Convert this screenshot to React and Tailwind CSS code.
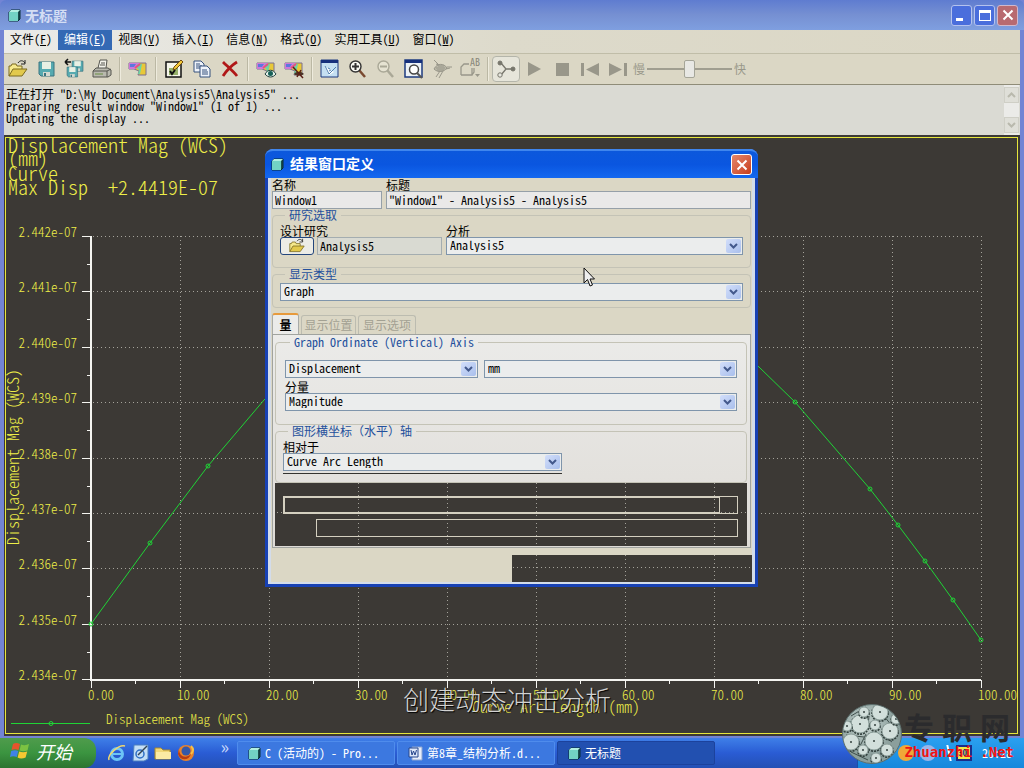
import React, { useState } from "react";

const xTicks = ["0.00", "10.00", "20.00", "30.00", "40.00", "50.00", "60.00", "70.00", "80.00", "90.00", "100.00"];
const yTicks = ["2.442e-07", "2.441e-07", "2.440e-07", "2.439e-07", "2.438e-07", "2.437e-07", "2.436e-07", "2.435e-07", "2.434e-07"];
const points = [[91, 624], [150, 543], [208, 466], [264, 400], [330, 335], [400, 285], [500, 255], [600, 268], [690, 312], [759, 367], [795, 402], [870, 489], [898, 525], [925, 561], [953, 600], [981, 640]];
const xAt = (i) => Math.round(91 + i * 88.95);
const yAt = (i) => Math.round(236 + i * 55.4);

const Grid = () => (
  <g stroke="#a5a39b" strokeWidth="1" strokeDasharray="1 3" shapeRendering="crispEdges">
    {yTicks.slice(0, 8).map((t, i) => <path key={t} d={`M93 ${yAt(i) + 0.5}H981`} />)}
    {xTicks.slice(1).map((t, i) => <path key={t} d={`M${xAt(i + 1) + 0.5} 236V679`} />)}
  </g>
);

const Chart = () => (
  <svg viewBox="4 135 1016 601" className="block w-full overflow-visible bg-[#3c3935]" role="img" aria-label="Displacement Mag (WCS)">
    <rect x="5.5" y="137.5" width="1012" height="596" fill="none" stroke="#e6e63c" shapeRendering="crispEdges" />
    <Grid />
    <g stroke="#f4f4f0" shapeRendering="crispEdges">
      <path strokeWidth="2" d="M91 236V681M90 680H981" />
      {yTicks.map((t, i) => <path key={t} d={`M82 ${yAt(i) + 0.5}H91`} />)}
      {yTicks.slice(1).map((t, i) => <path key={t} d={`M87 ${yAt(i) + 28.5}H91`} />)}
      {xTicks.map((t, i) => <path key={t} d={`M${xAt(i) + 0.5} 680V688`} />)}
      {xTicks.slice(1).map((t, i) => <path key={t} d={`M${xAt(i) + 44.5} 680V684`} />)}
    </g>
    <g fill="none" stroke="#1fd436">
      <polyline points={points.map((p) => p.join(",")).join(" ")} />
      {points.filter(([x]) => x !== 264 && x !== 759).map(([x, y]) => <circle key={x} cx={x} cy={y} r="2" />)}
      <path d="M11 723.5H90" />
      <circle cx="51" cy="723.5" r="2" />
    </g>
    <g fill="#eeee48" fontSize="20" fontWeight="300">
      <text x="8" y="153">Displacement Mag (WCS)</text>
      <text x="8" y="166">(mm)</text>
      <text x="8" y="181">Curve</text>
      <text x="8" y="195">Max Disp&#160; +2.4419E-07</text>
    </g>
    <g fill="#eeee48" fontSize="13" fontWeight="300">
      {yTicks.map((t, i) => <text key={t} x="77" y={yAt(i) + 1} textAnchor="end">{t}</text>)}
      {xTicks.map((t, i) => <text key={t} x={xAt(i) - 3} y="700">{t}</text>)}
      <text x="106" y="724">Displacement Mag (WCS)</text>
    </g>
    <g fill="#eeee48" fontSize="16" fontWeight="300">
      <text transform="translate(19 545) rotate(-90)">Displacement Mag (WCS)</text>
      <text x="472" y="713">Curve Arc Length (mm)</text>
    </g>
  </svg>
);

const Cube = () => (
  <svg viewBox="0 0 13 13" className="size-[13px] shrink-0">
    <path d="M1 3L3 1H12V10L10 12H1Z" fill="#1b4f4f" stroke="#062c34" />
    <path d="M1 3H10V12H1Z" fill="#72d2c4" />
    <path d="M1 3L3 1H12L10 3Z" fill="#b2eee2" />
  </svg>
);

const Svg = ({ children }) => <svg viewBox="0 0 20 20" className="size-5 overflow-visible" fill="none">{children}</svg>;

const Fringe = () => (
  <g>
    <path d="M1 4H18V16H10L11 12L6 10H1Z" fill="#e8c838" stroke="#7d7090" />
    <path d="M1 4H12L9 9L7 10H1Z" fill="#cf78d8" />
    <path d="M2 5H8L6 8H2Z" fill="#5b78dd" />
    <path d="M9 5L14 5L12 15H10L11 11L9 9Z" fill="#6fd3a4" />
    <path d="M7 9L12 5" stroke="#e85080" strokeWidth="2" />
  </g>
);

const Disk = () => (
  <g>
    <path d="M3 3H18V17H5L3 15Z" fill="#56aab0" stroke="#3b7480" />
    <path d="M6 3H15V10H6Z" fill="#e8f0e4" />
    <path d="M7 13H14V17H7Z" fill="#d5d9d0" />
    <path d="M8 14H10V17H8Z" fill="#3b7480" />
  </g>
);

const Lens = ({ color, fill, plus }) => (
  <g stroke={color}>
    <path d="M11 11L17 18" strokeWidth="2.5" stroke={plus ? "#7a4a30" : color} />
    <circle cx="7.500" cy="7.500" r="5.500" fill={fill} strokeWidth="1.400" />
    <path d={plus ? "M4 7.500H11M7.500 4V11" : "M4 7.500H11"} strokeWidth="2" />
  </g>
);

const Folder = () => (
  <g>
    <path d="M1 17V7H3L4 5H8L9 7H14V10" fill="#f6e98c" stroke="#7b6a20" />
    <path d="M1 17L5 10H19L14 17Z" fill="#e2c94c" stroke="#7b6a20" />
    <path d="M10 4C12 1 15 1 17 4M17 1V5H13" stroke="#222" />
  </g>
);

const icons = {
  open: <Folder />,
  save: <Disk />,
  saveAs: <g><g transform="translate(6 0) scale(.72)"><Disk /></g><g transform="translate(1 6) scale(.7)"><Disk /></g><path d="M1 3H7M1 3L4 0M1 3L4 6" stroke="#111" strokeWidth="1.500" /></g>,
  print: <g stroke="#55554f"><path d="M6 9L8 1H15L14 9" fill="#f4f4ec" /><path d="M9 4H13M8 6H13" /><path d="M1 12L4 9H16L19 11V16L16 18H1Z" fill="#b9b9ae" /><path d="M1 12H15L19 10M15 12V18" /><path d="M3 15H11" stroke="#6a8f44" /></g>,
  fringe: <Fringe />,
  edit: <g><path d="M2 3H17V18H2Z" fill="#f6f6ea" stroke="#111" strokeWidth="1.500" /><path d="M5 9H14V16H5Z" fill="#96b06a" /><path d="M6 12L8 15L11 11" stroke="#111" strokeWidth="2" /><path d="M9 11L10 8L17 1L19 3L12 10Z" fill="#f2c838" stroke="#6e4a10" /></g>,
  copy: <g stroke="#35507c"><path d="M2 2H9L12 5V13H2Z" fill="#eef3fa" /><path d="M4 5H8M4 7H10M4 9H10" /><path d="M8 7H15L18 10V18H8Z" fill="#eef3fa" /><path d="M10 11H15M10 13H16M10 15H16" /></g>,
  remove: <path d="M3 3C7 7 13 12 17 17M17 3C12 6 7 11 3 17" stroke="#b01818" strokeWidth="2.800" />,
  show: <g><Fringe /><path d="M9 15C12 10 17 10 20 15C17 19 12 19 9 15Z" fill="#e6f2ea" stroke="#1f3f3c" /><circle cx="14.500" cy="14.500" r="2.500" fill="#176058" /></g>,
  hide: <g><Fringe /><path d="M10 15C12 12 17 12 20 15C17 17 12 17 10 15Z" fill="#4a3226" /><path d="M9 8L19 19M13 18L17 11" stroke="#5a1f16" strokeWidth="1.500" /></g>,
  repaint: <g><path d="M1 1H18V18H1Z" fill="#c5e0f2" stroke="#1d3b80" /><path d="M1 1H18V4H1Z" fill="#16307c" /><path d="M4 7L14 13L9 16Z" fill="#fff" /><path d="M5 7L9 15L16 8M8 9L10 10M9 12L11 11" stroke="#4e7fb0" /></g>,
  zoomIn: <Lens color="#333" fill="#fafaf4" plus />,
  zoomOut: <Lens color="#aaa897" fill="#e6e3d2" />,
  refit: <g><path d="M1 1H18V18H1Z" fill="#edf2f6" stroke="#1d3b80" strokeWidth="1.500" /><path d="M1 1H18V4H1Z" fill="#16307c" /><circle cx="10" cy="10.500" r="4.500" stroke="#444" fill="#fff" strokeWidth="1.500" /><path d="M13 14L18 19" stroke="#555" strokeWidth="2" /></g>,
  fly: <g stroke="#99978a"><path d="M2 10C5 4 12 4 15 9C12 13 6 14 2 10Z" fill="#bab8a8" /><path d="M2 1L7 6L4 5M15 8H20M14 10L18 9M8 12L4 18M11 12L7 19M4 9H13M5 11H12M6 7H12" /></g>,
  notes: <g stroke="#99978a"><path d="M1 16V8L4 5H9M1 16H12V9M12 16L14 13V9M4 5L1 8" strokeWidth="1.300" /><path d="M15 15H20L17.500 18Z" fill="#99978a" stroke="none" /><text x="10" y="7" fontSize="10" stroke="none" fill="#8a887b">AB</text></g>,
  link: <g stroke="#77766c"><path d="M5 4L10 10H17M10 10L5 16" strokeWidth="1.300" /><circle cx="4" cy="4" r="2" fill="#77766c" /><circle cx="17" cy="10" r="2" fill="#77766c" /><circle cx="4" cy="16" r="2.200" fill="#e8e8e0" /></g>,
  play: <path d="M4 3L17 10L4 17Z" fill="#99978a" />,
  stop: <path d="M4 4H17V17H4Z" fill="#99978a" />,
  prev: <path d="M1 4H4V17H1ZM19 4V17L6 10.500Z" fill="#99978a" />,
  next: <path d="M1 4L14 10.500L1 17ZM16 4H19V17H16Z" fill="#99978a" />,
};

const toolGroups = [
  [["open", "打开"], ["save", "保存"], ["saveAs", "另存为"], ["print", "打印"]],
  [["fringe", "结果窗口"]],
  [["edit", "编辑"], ["copy", "复制"], ["remove", "删除"]],
  [["show", "显示"], ["hide", "隐藏"]],
  [["repaint", "重画"], ["zoomIn", "放大"], ["zoomOut", "缩小"], ["refit", "重新调整"], ["fly", "飞越"], ["notes", "注释"]],
  [["link", "链接"], ["play", "播放"], ["stop", "停止"], ["prev", "上一个"], ["next", "下一个"]],
];

const ToolBar = () => {
  const [speed, setSpeed] = useState(50);
  return (
    <div className="flex h-8 items-center border-y border-t-[#c0bda8] border-b-[#8f8c78] bg-[#dbd7c5]">
      {toolGroups.map((group, i) => (
        <React.Fragment key={i}>
          {i > 0 && <span className="mx-[3px] h-6 w-0.5 border-l border-[#bbb8a4] bg-[#eeebdd]" />}
          {group.map(([id, label]) => (
            <button key={id} aria-label={label}
              className={"flex h-[26px] w-7 items-center justify-center " + (id === "link" ? "rounded-sm border border-[#b4b5aa] bg-[#e6e5da]" : "")}>
              <Svg>{icons[id]}</Svg>
            </button>
          ))}
        </React.Fragment>
      ))}
      <label className="ml-px flex items-center gap-0.5 text-[#99978a]">
        慢
        <input type="range" value={speed} onChange={(e) => setSpeed(e.target.value)} aria-label="速度"
          className="h-5 w-[85px] appearance-none bg-transparent
          [&::-webkit-slider-runnable-track]:h-0.5
          [&::-webkit-slider-runnable-track]:bg-[#a09e90]
          [&::-webkit-slider-thumb]:-mt-2
          [&::-webkit-slider-thumb]:h-[18px]
          [&::-webkit-slider-thumb]:w-[11px]
          [&::-webkit-slider-thumb]:appearance-none
          [&::-webkit-slider-thumb]:rounded-xs
          [&::-webkit-slider-thumb]:border
          [&::-webkit-slider-thumb]:border-[#a5a598]
          [&::-webkit-slider-thumb]:bg-[#e8e8e4]" />
        <span>快</span>
      </label>
    </div>
  );
};

const menus = [["文件", "F"], ["编辑", "E"], ["视图", "V"], ["插入", "I"], ["信息", "N"], ["格式", "O"], ["实用工具", "U"], ["窗口", "W"]];

const MenuBar = () => (
  <nav className="flex h-[23px] bg-linear-to-r from-[#ebebe8] via-[#dddacb] to-[#dbd7c5]">
    {menus.map(([name, key]) => (
      <button key={key} className={"h-5 px-1.5 pb-0.5 " + (key === "E" ? "bg-[#3469b4] text-white" : "")}>
        {name}(<u>{key}</u>)
      </button>
    ))}
  </nav>
);

const CloseMark = () => (
  <svg viewBox="0 0 12 12" className="size-3"><path d="M1.500 1.500L10.500 10.500M10.500 1.500L1.500 10.500" stroke="#fff" strokeWidth="2" /></svg>
);

const TitleBar = () => (
  <header className="flex h-[30px] items-center gap-1 rounded-t-md bg-linear-to-b from-[#5f7cd0] via-[#7690d2] to-[#7f9fe0] pr-1.5 pl-2">
    <Cube />
    <h1 className="flex-1 text-[14px] font-bold text-[#d4def4]">无标题</h1>
    <div className="flex gap-0.5">
      <button aria-label="最小化" className="flex size-[21px] items-end rounded-[3px] border border-[#b4c2ee] bg-[#4a6edc] p-1">
        <span className="h-[3px] w-[7px] bg-white" />
      </button>
      <button aria-label="最大化" className="flex size-[21px] items-center justify-center rounded-[3px] border border-[#b4c2ee] bg-[#4a6edc]">
        <span className="h-[11px] w-3 border border-t-[3px] border-white" />
      </button>
      <button aria-label="关闭" className="flex size-[21px] items-center justify-center rounded-[3px] border border-[#d0b8cc] bg-[#b86a70]">
        <CloseMark />
      </button>
    </div>
  </header>
);

const Chevron = ({ up, color }) => (
  <svg viewBox="0 0 9 6" className="h-1.5 w-[9px]"><path d={up ? "M1 5L4.500 1.500L8 5" : "M1 1L4.500 4.500L8 1"} fill="none" stroke={color} strokeWidth="2" /></svg>
);

const Messages = () => (
  <div className="flex h-[50px] bg-[#dadad3]">
    <div className="flex-1 pt-[3px] pl-0.5 leading-3 whitespace-pre-wrap">
      <p>正在打开 "D:\My Document\Analysis5\Analysis5" ...</p>
      <p>Preparing result window "Window1" (1 of 1) ...</p>
      <p>Updating the display ...</p>
    </div>
    <div className="mr-px flex w-[15px] flex-col justify-between bg-[#ebebe8] py-0.5">
      <button aria-label="向上" className="flex h-4 items-center justify-center border border-[#cfcfc6] bg-[#dfdfd8]"><Chevron up color="#b9b9ad" /></button>
      <button aria-label="向下" className="flex h-4 items-center justify-center border border-[#cfcfc6] bg-[#dfdfd8]"><Chevron color="#b9b9ad" /></button>
    </div>
  </div>
);

const Select = ({ id, value, className = "" }) => (
  <div className={"relative h-[18px] " + className}>
    <select id={id} aria-label={value} defaultValue={value} className="block h-full w-full appearance-none border border-[#7f95ab] bg-[#ebeded] px-[3px] pb-0.5 leading-[14px]">
      <option>{value}</option>
    </select>
    <span className="pointer-events-none absolute inset-y-0.5 right-0.5 flex w-[15px] items-center justify-center rounded-xs bg-linear-to-br from-[#d2defa] to-[#a9bfec]">
      <Chevron color="#43598c" />
    </span>
  </div>
);

const Group = ({ title, className = "", children }) => (
  <fieldset className={"rounded-[4px] border border-[#c4c3b6] " + className}>
    <legend className="ml-[5px] px-1 leading-3 text-[#24509c] [font-feature-settings:inherit]">{title}</legend>
    {children}
  </fieldset>
);

const Dialog = () => (
  <section role="dialog" aria-labelledby="dlg-title" className="absolute top-[149px] left-[265px] w-[493px] rounded-t-lg border-[3px] border-t-0 border-[#1741b4] bg-[#dbd7c5]">
    <header className="-mx-[3px] flex h-[29px] items-center gap-1.5 rounded-t-lg border-t-2 border-[#3f86ee] bg-linear-to-b from-[#0c58dc] via-[#0a56e0] to-[#1468f0] pr-1.5 pl-1.5">
      <Cube />
      <h2 id="dlg-title" className="flex-1 pb-1 text-[14px] font-bold text-white">结果窗口定义</h2>
      <button aria-label="关闭" className="flex size-[21px] items-center justify-center rounded-[3px] border border-white bg-linear-to-br from-[#e4866a] to-[#c83c18]">
        <CloseMark />
      </button>
    </header>

    <div className="border-x-[3px] border-b-2 border-[#d3dcea] px-px">
      <div className="flex gap-1">
        <div className="w-[110px]">
          <label htmlFor="name" className="block leading-[13px]">名称</label>
          <input id="name" defaultValue="Window1" className="block h-[18px] w-full border border-[#95a0a8] bg-[#e9e9e8] px-0.5 pb-0.5" />
        </div>
        <div className="flex-1">
          <label htmlFor="title" className="block leading-[13px]">标题</label>
          <input id="title" defaultValue={'"Window1" - Analysis5 - Analysis5'} className="block h-[18px] w-full border border-[#95a0a8] bg-[#e9e9e8] px-0.5 pb-0.5" />
        </div>
      </div>

      <Group title="研究选取" className="px-[7px] pt-[3px] pb-3">
        <div className="flex gap-1">
          <div className="w-[162px]">
            <label htmlFor="study" className="block leading-[13px]">设计研究</label>
            <div className="flex gap-[3px]">
              <button aria-label="打开" className="flex h-[18px] w-[34px] items-center justify-center rounded-[3px] border border-[#24467c] bg-[#ecece6]">
                <svg viewBox="0 0 20 20" className="size-4" fill="none"><Folder /></svg>
              </button>
              <input id="study" readOnly value="Analysis5" className="h-[18px] w-[125px] border border-[#a4adb0] bg-[#d9dad2] px-0.5 pb-0.5" />
            </div>
          </div>
          <div className="flex-1">
            <label htmlFor="analysis" className="block leading-[13px]">分析</label>
            <Select id="analysis" value="Analysis5" />
          </div>
        </div>
      </Group>

      <Group title="显示类型" className="px-[7px] pt-[3px] pb-1.5">
        <Select id="display-type" value="Graph" />
      </Group>

      <div role="tablist" className="mt-[5px] flex h-[21px] items-end gap-0.5">
        <button role="tab" aria-selected="true" className="h-full w-[27px] rounded-t-[3px] border-x border-t-2 border-[#a8aba8] border-t-[#e79a3c] bg-[#ebebe9] font-bold">量</button>
        <button role="tab" aria-selected="false" className="h-[19px] w-[55px] rounded-t-[3px] border border-b-0 border-[#bcbcb0] text-[#a3a193]">显示位置</button>
        <button role="tab" aria-selected="false" className="h-[19px] w-[58px] rounded-t-[3px] border border-b-0 border-[#bcbcb0] text-[#a3a193]">显示选项</button>
      </div>

      <div className="border border-[#a0a39f] bg-linear-to-b from-[#ebebe9] to-[#dfdcd7] py-px pr-[3px] pl-0.5">
        <Group title="Graph Ordinate (Vertical) Axis" className="px-[9px] pt-3 pb-[13px]">
          <div className="flex gap-1.5">
            <Select id="quantity" value="Displacement" className="w-[193px]" />
            <Select id="unit" value="mm" className="flex-1" />
          </div>
          <label htmlFor="component" className="mt-0.5 block leading-[13px]">分量</label>
          <Select id="component" value="Magnitude" />
        </Group>
        <Group title={<span className="[font-feature-settings:normal]">图形横坐标（水平）轴</span>} className="px-[7px] pt-[3px] pb-2">
          <label htmlFor="relative" className="block leading-[13px]">相对于</label>
          <Select id="relative" value="Curve Arc Length" className="w-[279px]" />
          <div className="mt-0.5 h-px w-[279px] bg-[#34332f]" />
        </Group>
        <svg viewBox="275 484 472 63" className="block w-full bg-[#3c3935]">
          <Grid />
          <g fill="none" stroke="#d4d0c0" shapeRendering="crispEdges">
            <path d="M720 498H284V514H720" strokeWidth="2" />
            <path d="M719.500 497.500H737.500V514.500H719.500ZM316.500 520.500H737.500V537.500H316.500Z" />
          </g>
        </svg>
      </div>

      <svg viewBox="512 556 240 27" className="mt-[7px] -mr-px ml-auto block w-60 bg-[#3c3935]"><Grid /></svg>
    </div>
  </section>
);

const Flag = () => (
  <svg viewBox="0 0 20 20" className="size-5">
    <path d="M3 3Q6 1 10 3L8.500 9Q5 7.500 1.500 9Z" fill="#e8542c" />
    <path d="M11 3.500Q15 5 19 3L17.500 9.500Q13 11 9.500 9.500Z" fill="#7cc242" />
    <path d="M1.200 10Q5 8.500 8.200 10L6.800 16Q3 14.500 0 16Z" fill="#3f82e8" />
    <path d="M9.200 10.500Q13 12 17.200 10.500L15.600 16.500Q11 18.500 7.600 16.500Z" fill="#f6c832" />
  </svg>
);

const tasks = [["C (活动的) - Pro...", "cube"], ["第8章_结构分析.d...", "word"], ["无标题", "active"]];

const TaskBar = () => (
  <footer className="flex h-[30px] items-stretch bg-linear-to-b from-[#3f7fe8] via-[#2a5cd4] to-[#2450b4] text-white">
    <button className="flex w-24 items-center gap-1.5 rounded-r-xl bg-linear-to-b from-[#4f9c4c] via-[#3b9440] to-[#2c7430] pb-1 pl-2.5 text-[18px] italic">
      <Flag />开始
    </button>
    <div className="flex w-[141px] items-center gap-[3px] pl-[11px]">
      <button aria-label="Internet Explorer"><Svg>
        <circle cx="10" cy="11" r="5.500" stroke="#6cc4f6" strokeWidth="3" /><path d="M5 11H15" stroke="#6cc4f6" strokeWidth="2" /><path d="M2 17C0 12 12 1 18 3" stroke="#f0d870" strokeWidth="1.500" /></Svg></button>
      <button aria-label="显示桌面"><Svg>
        <path d="M4 2H18V16L14 18H3Z" fill="#c4def6" stroke="#4b7fc0" /><circle cx="10" cy="11" r="4" stroke="#2f6fc4" strokeWidth="1.500" /><path d="M8 12L17 3" stroke="#345" strokeWidth="1.500" /></Svg></button>
      <button aria-label="文件夹"><Svg>
        <path d="M2 16V5H8L10 7H17V16Z" fill="#f2d878" stroke="#a88a30" /><path d="M3 9H18V16H3Z" fill="#fbeaa4" /></Svg></button>
      <button aria-label="Firefox"><Svg>
        <circle cx="10" cy="10" r="8" fill="#e8822c" /><circle cx="10" cy="8" r="4.500" fill="#3558a8" /><path d="M3 6C3 14 10 16 15 11C13 18 4 18 2 11Z" fill="#b83c14" /><path d="M15 3C18 6 17 9 15 11" stroke="#f6c048" strokeWidth="2" /></Svg></button>
      <span className="ml-auto self-start pr-2 text-[18px] leading-4 text-[#c6d8fa]">»</span>
    </div>
    <div className="flex min-w-0 flex-1 gap-0.5 py-[3px]">
      {tasks.map(([name, kind]) => (
        <button key={name} className={"flex w-[158px] items-center gap-1 rounded-xs border px-2.5 whitespace-pre " + (kind === "active" ? "border-[#1c429c] bg-[#2250b0]" : "border-[#4f8cec] bg-[#3c78e0]")}>
          {kind === "word"
            ? <svg viewBox="0 0 15 15" className="size-[15px] shrink-0"><path d="M4 1H14V14H4Z" fill="#e8eefa" stroke="#8ca4d0" /><path d="M1 2H10V11H1Z" fill="#dde7fa" stroke="#27468c" /><path d="M3 4L4 9L5.500 5L7 9L8.500 4" fill="none" stroke="#27468c" /></svg>
            : <Cube />}
          {name}
        </button>
      ))}
    </div>
    <div className="flex w-[167px] items-center gap-1.5 border-l border-[#1a50a8] bg-linear-to-b from-[#2aa0f0] to-[#1688dc] pr-3">
      <span className="ml-auto size-4 rounded-full bg-[#f0a838]" />
      <span className="size-4 rounded-full bg-[#9ab4e8]" />
      <span className="h-4 w-2 skew-x-12 border-r-2 border-white" />
      <span className="size-4 border-2 border-[#1c2c88] bg-[#f0e848] text-[9px] leading-3 font-bold text-[#1c2c88]">30</span>
      <span className="ml-1">20:28</span>
    </div>
  </footer>
);

const gears = [[38, 8, 8], [18, 20, 9], [33, 21, 5], [48, 27, 8], [9, 38, 8], [32, 37, 9], [45, 46, 6], [21, 46, 5], [34, 54, 5], [5, 22, 5], [54, 15, 5], [22, 8, 5]];

const Ball = () => (
  <svg viewBox="0 0 60 60" className="size-[60px]">
    <defs>
      <radialGradient id="ball" cx=".4" cy=".35"><stop offset="0" stopColor="#c4d2ce" /><stop offset="1" stopColor="#8b9f9c" /></radialGradient>
      <clipPath id="ball-clip"><circle cx="30" cy="30" r="29" /></clipPath>
    </defs>
    <circle cx="30" cy="30" r="29.500" fill="url(#ball)" stroke="#5d706e" />
    <g clipPath="url(#ball-clip)">
      <path d="M9 12L24 3M42 12L50 22M4 31L22 33M39 30L50 38M24 30L18 42M9 48L26 56M38 50L50 50M27 12L26 22" stroke="#3f4e4b" fill="none" />
      {gears.map(([x, y, r]) => (
        <g key={x}>
          <circle cx={x} cy={y + 1} r={r} fill="none" stroke="#34423f" strokeWidth="2" strokeDasharray="2 1" />
          <circle cx={x} cy={y} r={r} fill="#d2dfdb" stroke="#8fa19d" />
          <circle cx={x} cy={y} r="1" fill="#34423f" />
        </g>
      ))}
    </g>
  </svg>
);

const Watermark = () => (
  <div className="pointer-events-none absolute right-2.5 bottom-1 flex items-start gap-0.5">
    <Ball />
    <div className="flex w-[110px] flex-col pt-1.5">
      <p className="flex justify-between pr-1 text-[30px] leading-8 font-bold text-[#2b2b2d]">
        <span>专</span><span>职</span><span>网</span>
      </p>
      <p className="text-right font-['DejaVu_Sans_Mono',monospace] text-[14px] leading-5 font-bold whitespace-nowrap text-[#f01414]">Zhuanzhi .Net</p>
    </div>
  </div>
);

const App = () => (
  <div className="relative flex min-h-screen flex-col bg-[#7284d4] font-['Noto_Sans_CJK_SC',sans-serif] text-[12px] leading-4 text-black [font-feature-settings:'hwid']">
    <TitleBar />
    <main className="mx-1 mb-0.5 flex-1">
      <MenuBar />
      <ToolBar />
      <Messages />
      <Chart />
    </main>
    <TaskBar />
    <Dialog />
    <svg viewBox="0 0 12 20" className="pointer-events-none absolute top-[267px] left-[583px] h-5 w-3">
      <path d="M1 1V16L4.500 12.500L7 19L9.500 18L7 12H11.500Z" fill="#eee" stroke="#111" />
    </svg>
    <p className="pointer-events-none absolute inset-x-0 bottom-[53px] pr-2.5 text-center text-[26px] leading-8 font-light text-[#d2d2d2] text-shadow-[1px_1px_1px_black]">创建动态冲击分析</p>
    <Watermark />
  </div>
);

export default App;
